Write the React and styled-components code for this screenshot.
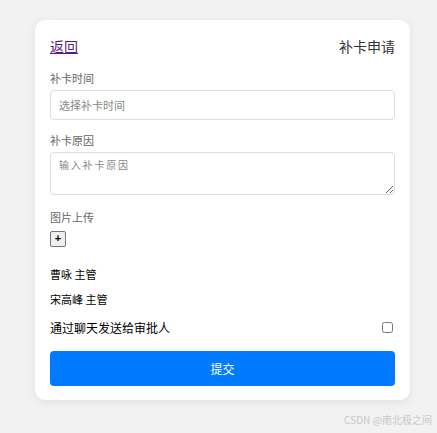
import React from "react"
import styled, { createGlobalStyle } from "styled-components"

const GlobalStyle = createGlobalStyle`
	html, body {
		margin: 0;
		padding: 0;
		background: #f2f2f2;
	}

	body {
		font-family: "Noto Sans CJK SC", "Liberation Sans", sans-serif;
		color: #000;
	}
`

const approvers = [
	{ name: "曹咏", role: "主管" },
	{ name: "宋高峰", role: "主管" },
]

const App = () => {
	return (
		<>
			<GlobalStyle />
			<Page>
				<Card>
					<Header>
						<BackLink href="#">返回</BackLink>
						<Title>补卡申请</Title>
					</Header>

					<Field $gap={12}>
						<Label $gap={4}>补卡时间</Label>
						<Input type="text" placeholder="选择补卡时间" />
					</Field>

					<Field $gap={14}>
						<Label $gap={4}>补卡原因</Label>
						<TextArea placeholder="输入补卡原因" />
					</Field>

					<Field>
						<Label $gap={6}>图片上传</Label>
						<PlusButton type="button">+</PlusButton>
					</Field>

					<Approvers>
						{approvers.map((item) => (
							<Approver key={item.name}>
								{item.name} {item.role}
							</Approver>
						))}
					</Approvers>

					<CheckRow>
						<span>通过聊天发送给审批人</span>
						<CheckBox type="checkbox" />
					</CheckRow>

					<SubmitButton type="button">提交</SubmitButton>
				</Card>
				<Watermark>CSDN @南北极之间</Watermark>
			</Page>
		</>
	)
}

const Page = styled.div`
	position: relative;
	width: 437px;
	height: 433px;
	padding: 20px 0 0 35px;
	box-sizing: border-box;
	background: #f2f2f2;
`

const Card = styled.div`
	width: 375px;
	height: 380px;
	box-sizing: border-box;
	padding: 15px 15px 14px;
	background: #fff;
	border-radius: 10px;
	box-shadow: 0 2px 10px rgba(0, 0, 0, 0.08);
	display: flex;
	flex-direction: column;
`

const Header = styled.div`
	height: 22px;
	display: flex;
	align-items: center;
	justify-content: space-between;
	margin-bottom: 13px;
`

const BackLink = styled.a`
	font-size: 14px;
	color: #551a8b;
	text-decoration: underline;
`

const Title = styled.span`
	font-size: 14px;
	color: #333;
`

const Field = styled.div`
	display: flex;
	flex-direction: column;
	align-items: flex-start;
	margin-bottom: ${(props) => props.$gap || 11}px;
`

const Label = styled.label`
	font-size: 11px;
	line-height: 16px;
	color: #666;
	margin-bottom: ${(props) => props.$gap || 5}px;
`

const Input = styled.input`
	width: 100%;
	height: 30px;
	box-sizing: border-box;
	padding: 0 8px;
	border: 1px solid #ddd;
	border-radius: 4px;
	font-family: "Noto Sans CJK SC", sans-serif;
	font-size: 11px;
	outline: none;

	&::placeholder {
		color: #888;
	}
`

const TextArea = styled.textarea`
	display: block;
	width: 100%;
	height: 43px;
	box-sizing: border-box;
	padding: 7px 8px;
	border: 1px solid #ddd;
	border-radius: 4px;
	font-family: "Liberation Mono", "Noto Sans CJK SC", monospace;
	font-size: 10px;
	letter-spacing: 1.8px;
	line-height: 14px;
	outline: none;

	&::placeholder {
		color: #888;
	}
`

const PlusButton = styled.button`
	width: 16px;
	height: 16px;
	padding: 0;
	box-sizing: border-box;
	border: 1px solid #767676;
	border-radius: 2px;
	background: #efefef;
	font-family: "Liberation Sans", sans-serif;
	font-size: 11px;
	font-weight: bold;
	line-height: 13px;
	color: #000;
`

const Approvers = styled.div`
	display: flex;
	flex-direction: column;
	margin-top: 4px;
`

const Approver = styled.div`
	font-size: 11px;
	line-height: 25px;
	font-weight: 400;
	color: #000;
`

const CheckRow = styled.div`
	display: flex;
	align-items: center;
	justify-content: space-between;
	height: 20px;
	margin-top: 6px;
	font-size: 12px;
`

const CheckBox = styled.input`
	width: 11px;
	height: 11px;
	margin: 0 2px 0 0;
`

const SubmitButton = styled.button`
	margin-top: 14px;
	height: 35px;
	border: none;
	border-radius: 4px;
	background: #007bff;
	color: #fff;
	font-family: "Noto Sans CJK SC", sans-serif;
	font-size: 12px;
`

const Watermark = styled.span`
	position: absolute;
	right: 5px;
	bottom: 6px;
	font-size: 10px;
	color: #c8c8c8;
`

export default App
